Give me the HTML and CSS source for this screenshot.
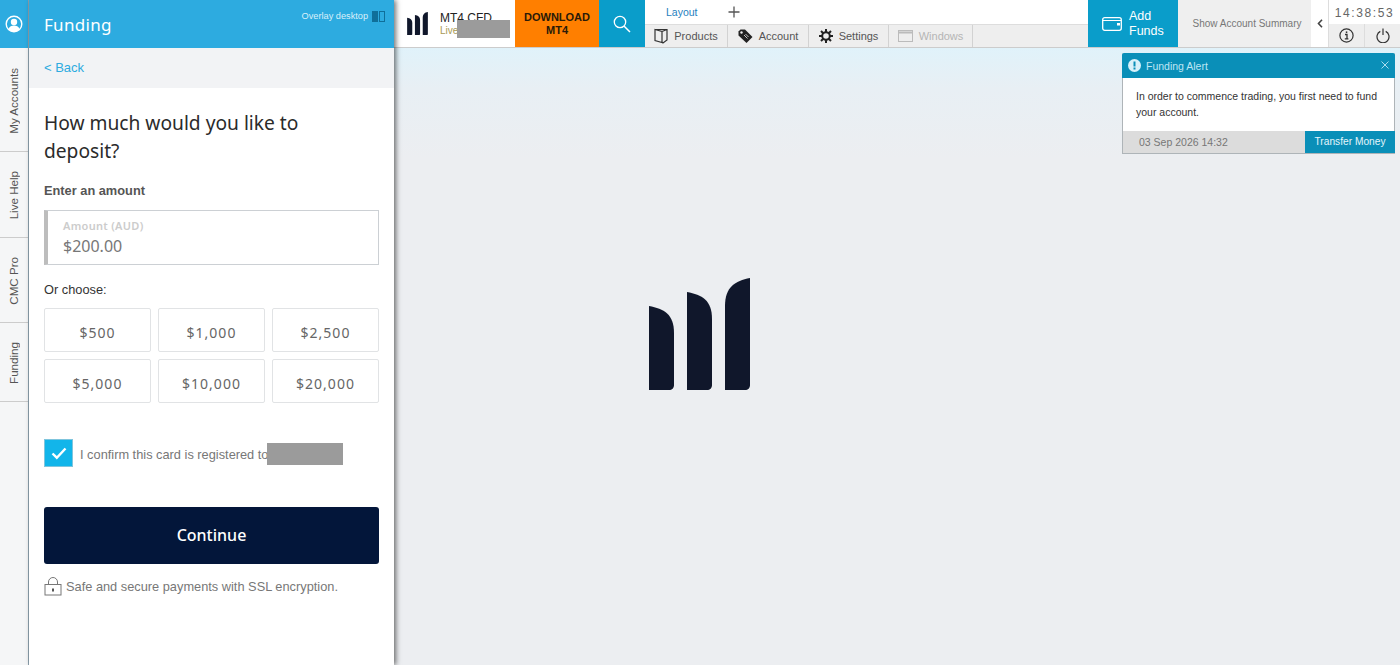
FILE: index.html
```html
<!DOCTYPE html>
<html lang="en">
<head>
  <meta charset="UTF-8">
  <meta name="viewport" content="width=device-width, initial-scale=1.0">
  <title>Funding</title>
  <link rel="stylesheet" href="styles.css">
</head>
<body>

<div class="app">
  <nav class="side-nav">
    <div class="side-avatar">
      <svg width="18" height="18" viewBox="0 0 18 18">
        <circle cx="9" cy="9" r="7.8" fill="none" stroke="#fff" stroke-width="1.4"/>
        <circle cx="9" cy="7" r="3.2" fill="#fff"/>
        <path d="M3.4 14.2c1-2.6 3.2-3.6 5.6-3.6s4.600 1 5.600 3.600c-1.500 1.500-3.500 2.400-5.600 2.400s-4.100-.9-5.600-2.400z" fill="#fff"/>
      </svg>
    </div>
    <a class="side-tab tab-accounts"><span>My Accounts</span></a>
    <a class="side-tab tab-help"><span>Live Help</span></a>
    <a class="side-tab tab-pro"><span>CMC Pro</span></a>
    <a class="side-tab tab-funding"><span>Funding</span></a>
  </nav>

  <aside class="panel">
    <header class="panel-head">
      <h1>Funding</h1>
      <div class="overlay-toggle">
        <span>Overlay desktop</span>
        <i class="toggle-icon"><b></b><b></b></i>
      </div>
    </header>
    <div class="back-bar"><a>&lt; Back</a></div>
    <form class="deposit">
      <h2>How much would you like to deposit?</h2>
      <label class="amount-label">Enter an amount</label>
      <div class="amount-box">
        <span class="amount-hint">Amount (AUD)</span>
        <span class="amount-value">$200.00</span>
      </div>
      <p class="choose-label">Or choose:</p>
      <div class="amount-grid">
        <button type="button" class="amount-btn">$500</button>
        <button type="button" class="amount-btn">$1,000</button>
        <button type="button" class="amount-btn">$2,500</button>
        <button type="button" class="amount-btn">$5,000</button>
        <button type="button" class="amount-btn">$10,000</button>
        <button type="button" class="amount-btn">$20,000</button>
      </div>
      <div class="confirm">
        <span class="check">
          <svg width="18" height="14" viewBox="0 0 18 14"><path d="M2.500 7.500l4.300 4.200 8.700-9.200" fill="none" stroke="#fff" stroke-width="2.400"/></svg>
        </span>
        <span class="confirm-text">I confirm this card is registered to<i class="redact redact-name"></i></span>
      </div>
      <button type="button" class="continue-btn">Continue</button>
      <p class="secure">
        <svg width="18" height="19" viewBox="0 0 18 19">
          <path d="M4.500 7.500V5a4.500 4.500 0 0 1 9 0v2.500" fill="none" stroke="#777" stroke-width="1"/>
          <rect x="1" y="7.500" width="16" height="10.500" fill="none" stroke="#777" stroke-width="1"/>
          <rect x="8" y="11.500" width="2" height="3" fill="#555"/>
        </svg>
        <span>Safe and secure payments with SSL encryption.</span>
      </p>
    </form>
  </aside>

  <main class="workspace">
    <div class="topbar">
      <div class="brand">
        <svg class="brand-logo" width="21" height="23" viewBox="0 0 101 112"><use href="#cmcMark"/></svg>
        <div class="brand-text">
          <span class="brand-name">MT4 CFD</span>
          <span class="brand-live">Live</span>
        </div>
        <i class="redact redact-account"></i>
      </div>
      <a class="download">DOWNLOAD<br>MT4</a>
      <a class="search">
        <svg width="18" height="18" viewBox="0 0 18 18"><circle cx="7" cy="7" r="5.700" fill="none" stroke="#fff" stroke-width="1.300"/><path d="M11 11l6 6" stroke="#fff" stroke-width="1.500"/></svg>
      </a>
      <div class="menus">
        <div class="layout-row">
          <a class="layout-link">Layout</a>
          <svg width="12" height="12" viewBox="0 0 12 12"><path d="M6 .5v11M.5 6h11" stroke="#555" stroke-width="1.300"/></svg>
        </div>
        <div class="menu-row">
          <a class="menu-item item-products">
            <svg width="14" height="16" viewBox="0 0 14 16"><path d="M1 1.500h12v10.500l-4 3-1-1H8M1 1.500l7 2v11L1 12.500zM8 3.500l5-2" fill="none" stroke="#333" stroke-width="1.200"/></svg>
            Products
          </a>
          <a class="menu-item item-account">
            <svg width="15" height="15" viewBox="0 0 15 15"><path d="M.5 2.500l2-2h4.500l7.500 7.500-6 6L.5 6.500z" fill="#222"/><circle cx="3.500" cy="3.500" r="1.200" fill="#eee"/><path d="M6 6l3.500 3.500M7.500 5l3 3" stroke="#eee" stroke-width=".8"/></svg>
            Account
          </a>
          <a class="menu-item item-settings">
            <svg width="14" height="14" viewBox="0 0 14 14"><circle cx="7" cy="7" r="3.800" fill="none" stroke="#222" stroke-width="2"/><path d="M7 0v3M7 11v3M0 7h3M11 7h3M2 2l2.200 2.200M9.800 9.800L12 12M12 2L9.800 4.200M4.200 9.800L2 12" stroke="#222" stroke-width="2"/></svg>
            Settings
          </a>
          <a class="menu-item item-windows">
            <svg width="15" height="12" viewBox="0 0 15 12"><rect x=".5" y=".5" width="14" height="11" fill="none" stroke="#bbb"/><path d="M1 2.500h13" stroke="#bbb" stroke-width="2"/></svg>
            Windows
          </a>
        </div>
      </div>
      <a class="add-funds">
        <svg width="20" height="14" viewBox="0 0 20 14"><rect x=".7" y=".7" width="18.600" height="12.600" rx="2" fill="none" stroke="#fff" stroke-width="1.300"/><path d="M1 3.500h18" stroke="#fff"/><rect x="15" y="6" width="3" height="2.500" fill="#fff"/></svg>
        <span>Add<br>Funds</span>
      </a>
      <a class="summary">Show Account Summary</a>
      <a class="chevron">
        <svg width="6" height="9" viewBox="0 0 6 9"><path d="M5 .8L1.500 4.500 5 8.200" fill="none" stroke="#444" stroke-width="1.600"/></svg>
      </a>
      <div class="clock-box">
        <div class="clock">14:38:53</div>
        <div class="clock-btns">
          <a class="clock-btn">
            <svg width="15" height="15" viewBox="0 0 15 15"><circle cx="7.500" cy="7.500" r="6.600" fill="none" stroke="#333" stroke-width="1.200"/><path d="M6 6.500h2v4.200M5.800 10.800h3.600" fill="none" stroke="#333" stroke-width="1.300"/><rect x="6.800" y="3.400" width="1.500" height="1.600" fill="#333"/></svg>
          </a>
          <a class="clock-btn">
            <svg width="14" height="15" viewBox="0 0 14 15"><path d="M4.300 3.400a6 6 0 1 0 5.400 0M7 .5v6.500" fill="none" stroke="#333" stroke-width="1.200"/></svg>
          </a>
        </div>
      </div>
    </div>

    <div class="stage">
      <svg class="stage-logo" width="101" height="112" viewBox="0 0 101 112">
        <defs>
          <g id="cmcMark">
            <path d="M0 28c15 3 25 8 25 27v52c0 3-2 5-5 5H0z"/>
            <path d="M38 14c15 3 25 8 25 27v66c0 3-2 5-5 5H38z"/>
            <path d="M101 0v107c0 3-2 5-5 5H76V28c0-19 10-25 25-28z"/>
          </g>
        </defs>
        <use href="#cmcMark"/>
      </svg>
    </div>

    <section class="alert">
      <div class="alert-head">
        <svg width="13" height="13" viewBox="0 0 13 13"><circle cx="6.500" cy="6.500" r="6.500" fill="#d8f1fa"/><rect x="5.500" y="2.500" width="2" height="5" fill="#0a8fb8"/><rect x="5.500" y="8.500" width="2" height="2" fill="#0a8fb8"/></svg>
        <span class="alert-title">Funding Alert</span>
        <svg class="alert-close" width="8" height="8" viewBox="0 0 8 8"><path d="M.5.500l7 7M7.500.500l-7 7" stroke="#a8dcee"/></svg>
      </div>
      <p class="alert-body">In order to commence trading, you first need to fund your account.</p>
      <div class="alert-foot">
        <span class="alert-date">03 Sep 2026 14:32</span>
        <a class="alert-action">Transfer Money</a>
      </div>
    </section>
  </main>
</div>

</body>
</html>
```

FILE: styles.css
```css
* {
  box-sizing: border-box;
}

html,
body {
  height: 100%;
  margin: 0;
  overflow: hidden;
}

body {
  font-family: "Liberation Sans", Arial, sans-serif;
  background-color: #eceef1;
  color: #333;
}

.app {
  display: flex;
  height: 665px;
}

/* side tabs */
.side-nav {
  width: 29px;
  flex: none;
  background-color: #f5f6f7;
  border-right: 1px solid #8ea3b0;
  display: flex;
  flex-direction: column;
}

.side-avatar {
  height: 48px;
  background-color: #2dabe0;
  display: flex;
  align-items: center;
  justify-content: center;
}

.side-tab {
  display: flex;
  align-items: center;
  justify-content: center;
  padding: 2px 2px 0 0;
  border-bottom: 1px solid #ccc;
  font-size: 11.600px;
  color: #555;
}

.side-tab span {
  writing-mode: vertical-rl;
  transform: rotate(180deg);
}

.tab-accounts {
  height: 104px;
}

.tab-help {
  height: 86px;
}

.tab-pro {
  height: 85px;
}

.tab-funding {
  height: 79px;
}

/* funding panel */
.panel {
  width: 365px;
  flex: none;
  background-color: #fff;
  box-shadow: 2px 0 5px rgba(0, 0, 0, 0.55);
  position: relative;
  z-index: 2;
}

.panel-head {
  height: 48px;
  background-color: #2dabe0;
  color: #fff;
  padding-left: 15px;
  display: flex;
  justify-content: space-between;
}

.panel-head h1 {
  margin: 0;
  font-family: "Noto Sans", sans-serif;
  font-size: 17px;
  font-weight: 400;
  line-height: 49px;
  letter-spacing: 0.3px;
}

.overlay-toggle {
  display: flex;
  align-items: center;
  gap: 4px;
  height: 16px;
  margin-top: 8px;
  padding-right: 9px;
  font-size: 9.200px;
  color: #d9f0fa;
}

.toggle-icon {
  display: flex;
  gap: 1px;
}

.toggle-icon b {
  display: block;
  width: 6px;
  height: 11px;
  background-color: #0f6f9a;
}

.toggle-icon b + b {
  background-color: #2dabe0;
  border: 1px solid #0f6f9a;
}

.back-bar {
  height: 40px;
  padding-left: 15px;
  background-color: #f2f3f5;
  font-size: 13px;
  line-height: 40px;
  color: #2dabe0;
}

.deposit {
  padding: 21px 15px 0;
}

.deposit h2 {
  max-width: 300px;
  margin: 0;
  font-family: "Noto Sans", sans-serif;
  font-size: 19.200px;
  font-weight: 400;
  line-height: 28px;
  color: #2b2b2b;
}

.amount-label {
  display: block;
  margin-top: 17px;
  font-size: 12.800px;
  font-weight: 700;
  line-height: 18px;
  color: #555;
}

.amount-box {
  height: 55px;
  margin-top: 10px;
  padding: 7px 15px 0;
  border: 1px solid #ccd0d4;
  border-left: 4px solid #bdbdbd;
  display: flex;
  flex-direction: column;
}

.amount-hint {
  font-family: "Noto Sans", sans-serif;
  font-size: 11px;
  font-weight: 600;
  line-height: 16px;
  color: #ccc;
  letter-spacing: 0.3px;
}

.amount-value {
  font-family: "Noto Sans", sans-serif;
  font-size: 16px;
  line-height: 24px;
  color: #777;
}

.choose-label {
  margin: 16px 0 0;
  font-size: 12.800px;
  line-height: 18px;
  color: #333;
}

.amount-grid {
  display: grid;
  grid-template-columns: repeat(3, 107px);
  grid-auto-rows: 44px;
  gap: 7px;
  margin-top: 9px;
}

.amount-btn {
  padding: 4px 0 0;
  border: 1px solid #e1e3e5;
  border-radius: 2px;
  background-color: #fff;
  font-family: "Noto Sans", sans-serif;
  font-size: 14px;
  letter-spacing: 1px;
  color: #666;
}

.confirm {
  display: flex;
  align-items: center;
  gap: 7px;
  height: 28px;
  margin-top: 36px;
}

.check {
  width: 29px;
  height: 28px;
  flex: none;
  background-color: #12b5ea;
  border: 1px solid #7fc5dd;
  display: flex;
  align-items: center;
  justify-content: center;
}

.confirm-text {
  position: relative;
  margin-top: 3px;
  font-size: 12.800px;
  color: #777;
}

.continue-btn {
  display: block;
  width: 335px;
  height: 57px;
  margin-top: 40px;
  padding: 0 0 2px;
  border: none;
  border-radius: 3px;
  background-color: #03163a;
  color: #fff;
  font-family: "Noto Sans", sans-serif;
  font-size: 16px;
  font-weight: 500;
}

.secure {
  display: flex;
  align-items: center;
  gap: 4px;
  margin: 13px 0 0;
  font-size: 12.800px;
  line-height: 19px;
  color: #777;
}

.redact {
  position: absolute;
  display: block;
  background-color: #9b9b9b;
}

.redact-name {
  left: 187px;
  top: -4px;
  width: 76px;
  height: 22px;
}

/* right hand side */
.workspace {
  flex: 1;
  min-width: 0;
  position: relative;
  display: flex;
  flex-direction: column;
}

.topbar {
  height: 48px;
  flex: none;
  display: flex;
  background-color: #fff;
  border-bottom: 1px solid #ccc;
}

.brand {
  width: 121px;
  flex: none;
  position: relative;
  display: flex;
  align-items: center;
  padding-left: 13px;
  gap: 12px;
}

.brand-logo {
  fill: #10172b;
}

.brand-text {
  display: flex;
  flex-direction: column;
}

.brand-name {
  font-size: 12px;
  line-height: 14px;
  color: #222;
}

.brand-live {
  font-size: 10px;
  line-height: 12px;
  color: #a89a55;
}

.redact-account {
  left: 63px;
  top: 20px;
  width: 53px;
  height: 18px;
}

.download {
  width: 84px;
  flex: none;
  background-color: #ff7f00;
  color: #2a1a08;
  font-size: 11px;
  font-weight: 700;
  line-height: 13px;
  text-align: center;
  padding-top: 11px;
}

.search {
  width: 46px;
  flex: none;
  background-color: #0a9dca;
  display: flex;
  align-items: center;
  justify-content: center;
}

.menus {
  width: 443px;
  flex: none;
  display: flex;
  flex-direction: column;
}

.layout-row {
  height: 24px;
  padding-left: 21px;
  display: flex;
  align-items: center;
  gap: 30px;
}

.layout-link {
  font-size: 10.500px;
  color: #1f7fc0;
}

.menu-row {
  flex: 1;
  display: flex;
  background-color: #eee;
  border-top: 1px solid #ddd;
}

.menu-item {
  display: flex;
  align-items: center;
  justify-content: center;
  gap: 6px;
  border-right: 1px solid #d2d2d2;
  font-size: 11px;
  color: #555;
}

.item-products {
  width: 83px;
}

.item-account {
  width: 81px;
}

.item-settings {
  width: 80px;
}

.item-windows {
  width: 84px;
  color: #b5b5b5;
}

.add-funds {
  width: 90px;
  flex: none;
  background-color: #0a9dca;
  color: #fff;
  font-size: 12.500px;
  line-height: 15px;
  display: flex;
  align-items: center;
  gap: 7px;
  padding-left: 14px;
}

.summary {
  width: 133px;
  flex: none;
  padding-left: 5px;
  background-color: #efefef;
  font-size: 10px;
  line-height: 47px;
  text-align: center;
  color: #777;
}

.chevron {
  width: 17px;
  flex: none;
  display: flex;
  align-items: center;
  justify-content: center;
}

.clock-box {
  flex: 1;
  display: flex;
  flex-direction: column;
  border-left: 1px solid #ddd;
}

.clock {
  height: 24px;
  font-size: 12px;
  line-height: 26px;
  text-align: center;
  color: #666;
  letter-spacing: 1.600px;
}

.clock-btns {
  flex: 1;
  display: flex;
  background-color: #eee;
}

.clock-btn {
  flex: 1;
  display: flex;
  align-items: center;
  justify-content: center;
}

.clock-btn + .clock-btn {
  border-left: 1px solid #ddd;
}

.stage {
  flex: 1;
  display: flex;
  align-items: center;
  justify-content: center;
  padding-bottom: 45px;
  background: linear-gradient(#e0f2fa 0, #e8eff4 40px, #eceef1 110px);
}

/* logo sits in the middle of the window, not of this column */
.stage-logo {
  fill: #10172b;
  margin-right: 395px;
}

/* funding alert */
.alert {
  position: absolute;
  top: 53px;
  right: 5px;
  width: 273px;
  height: 101px;
  background-color: #fff;
  border: 1px solid #aeb4b8;
  border-top: none;
  border-radius: 2px 2px 0 0;
  display: flex;
  flex-direction: column;
  z-index: 3;
}

.alert-head {
  height: 25px;
  margin: 0 -1px;
  padding: 0 6px;
  background-color: #0a8fb8;
  border-radius: 2px 2px 0 0;
  display: flex;
  align-items: center;
  gap: 5px;
}

.alert-title {
  flex: 1;
  font-size: 10.500px;
  color: #bfe6f4;
}

.alert-close {
  margin-top: -2px;
  margin-right: 0;
}

.alert-body {
  flex: 1;
  margin: 0;
  padding: 10px 13px 0;
  font-size: 10.500px;
  line-height: 16px;
  color: #333;
}

.alert-foot {
  height: 22px;
  margin-right: -1px;
  display: flex;
  background-color: #dcdcdc;
}

.alert-date {
  flex: 1;
  padding-left: 16px;
  font-size: 10.500px;
  line-height: 22px;
  color: #777;
}

.alert-action {
  width: 90px;
  background-color: #0a8fb8;
  font-size: 10.200px;
  line-height: 22px;
  text-align: center;
  color: #e4f5fb;
}
```
